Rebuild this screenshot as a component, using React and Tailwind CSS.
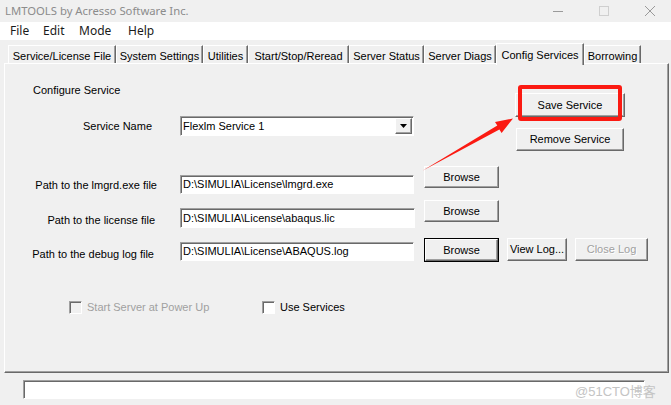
import React from 'react';

// classic win32 3D edges
const raised =
  'bg-[#f0f0f0] border border-t-white border-l-white border-r-[#696969] border-b-[#696969] shadow-[inset_-1px_-1px_0_#a0a0a0]';
const sunken =
  'bg-white border border-t-[#a0a0a0] border-l-[#a0a0a0] border-r-white border-b-white shadow-[inset_1px_1px_0_#696969]';

const tabs = [
  { label: 'Service/License File', w: 'w-[108px]' },
  { label: 'System Settings', w: 'w-[87px]' },
  { label: 'Utilities', w: 'w-[45px]' },
  { label: 'Start/Stop/Reread', w: 'w-[101px]' },
  { label: 'Server Status', w: 'w-[75px]' },
  { label: 'Server Diags', w: 'w-[72px]' },
  { label: 'Config Services', w: 'w-[88px]', active: true },
  { label: 'Borrowing', w: 'w-[57px]' },
];

const Button = ({ children, className = '', disabled }) => (
  <div
    className={`${raised} flex items-center justify-center text-[11px] ${
      disabled ? 'text-[#a0a0a0] [text-shadow:1px_1px_0_#fff]' : 'text-black'
    } ${className}`}
  >
    {children}
  </div>
);

const Field = ({ value, className = '' }) => (
  <div className={`${sunken} flex items-center pl-[2px] text-[11px] text-black ${className}`}>
    {value}
  </div>
);

const Checkbox = ({ label, disabled }) => (
  <div className="flex items-center">
    <div
      className={`w-[13px] h-[13px] border border-t-[#a0a0a0] border-l-[#a0a0a0] border-r-white border-b-white shadow-[inset_1px_1px_0_#696969] ${
        disabled ? 'bg-[#f0f0f0]' : 'bg-white'
      }`}
    />
    <span className={`ml-[5px] text-[11px] ${disabled ? 'text-[#a0a0a0]' : 'text-black'}`}>{label}</span>
  </div>
);

export default function App() {
  return (
    <div className="relative w-[671px] h-[405px] overflow-hidden bg-[#f0f0f0] font-['Liberation_Sans',Arial,sans-serif] select-none">
      {/* title bar */}
      <div className="h-[22px] flex items-center">
        <span className="ml-[5px] text-[11.3px] text-[#8c8c8c] font-['Noto_Sans',sans-serif]">
          LMTOOLS by Acresso Software Inc.
        </span>
        <div className="ml-auto flex items-center h-full mr-[-2px]">
          <div className="w-[46px] flex justify-center">
            <svg width="10" height="10" viewBox="0 0 10 10">
              <path d="M0 5.5h10" stroke="#9a9a9a" strokeWidth="1" />
            </svg>
          </div>
          <div className="w-[46px] flex justify-center">
            <svg width="10" height="10" viewBox="0 0 10 10">
              <rect x="0.5" y="0.5" width="9" height="9" fill="none" stroke="#cfcfcf" />
            </svg>
          </div>
          <div className="w-[46px] flex justify-center">
            <svg width="10" height="10" viewBox="0 0 10 10">
              <path d="M0 0L10 10M10 0L0 10" stroke="#9a9a9a" strokeWidth="1" />
            </svg>
          </div>
        </div>
      </div>

      {/* menu bar */}
      <div className="h-[18px] bg-white flex items-center pl-[10px] text-[12px] text-[#1a1a1a] font-['Noto_Sans',sans-serif]">
        <span className="w-[33px]">File</span>
        <span className="w-[36px]">Edit</span>
        <span className="w-[49px]">Mode</span>
        <span>Help</span>
      </div>

      {/* tab strip */}
      <div className="mt-[3px] h-[20px] flex items-end pl-[8px]">
        {tabs.map((t) =>
          t.active ? (
            <div
              key={t.label}
              className={`${t.w} relative z-10 h-[22px] mb-[-2px] bg-[#f0f0f0] border-t border-l border-white border-r border-r-[#696969] shadow-[inset_-1px_0_0_#a0a0a0] flex justify-center pt-[3px] text-[11px] text-black`}
            >
              {t.label}
            </div>
          ) : (
            <div
              key={t.label}
              className={`${t.w} h-[18px] border-t border-l border-white border-r border-r-[#696969] shadow-[inset_-1px_0_0_#a0a0a0] flex justify-center pt-[2px] text-[11px] text-black`}
            >
              {t.label}
            </div>
          )
        )}
      </div>

      {/* tab panel */}
      <div className={`${raised} ml-[4px] w-[665px] h-[310px] flex flex-col`}>
        <div className="flex">
          <div className="w-[510px]">
            <div className="mt-[20px] ml-[28px] h-[12px] leading-[12px] text-[11px]">Configure Service</div>
            <div className="mt-[20px] flex items-center h-[20px]">
              <div className="w-[147px] text-right text-[11px]">Service Name</div>
              <div className={`${sunken} ml-[28px] w-[234px] h-[20px] flex items-center text-[11px]`}>
                <span className="pl-[2px] flex-1">Flexlm Service 1</span>
                <div className={`${raised} w-[17px] h-[16px] mr-[1px] flex items-center justify-center`}>
                  <svg width="7" height="4" viewBox="0 0 7 4">
                    <path d="M0 0h7L3.5 4z" fill="#000" />
                  </svg>
                </div>
              </div>
            </div>
          </div>
          <div className="flex flex-col">
            <Button className="mt-[29px] w-[110px] h-[24px]">Save Service</Button>
            <Button className="mt-[11px] ml-[1px] w-[108px] h-[23px]">Remove Service</Button>
          </div>
        </div>

        {/* path rows */}
        <div className="mt-[15px] h-[29px] flex items-start">
          <div className="w-[152px] mt-[13px] h-[13px] leading-[13px] text-right text-[11px]">
            Path to the lmgrd.exe file
          </div>
          <Field className="ml-[23px] mt-[9px] w-[234px] h-[19px]" value={'D:\\SIMULIA\\License\\lmgrd.exe'} />
          <Button className="ml-[10px] w-[75px] h-[22px]">Browse</Button>
        </div>

        <div className="mt-[5px] h-[28px] flex items-start">
          <div className="w-[150px] mt-[14px] h-[13px] leading-[13px] text-right text-[11px]">
            Path to the license file
          </div>
          <Field className="ml-[25px] mt-[8px] w-[235px] h-[20px]" value={'D:\\SIMULIA\\License\\abaqus.lic'} />
          <Button className="ml-[9px] w-[75px] h-[22px]">Browse</Button>
        </div>

        <div className="mt-[10px] h-[24px] flex items-start">
          <div className="w-[149px] mt-[10px] h-[13px] leading-[13px] text-right text-[11px]">
            Path to the debug log file
          </div>
          <Field className="ml-[26px] mt-[4px] w-[234px] h-[19px]" value={'D:\\SIMULIA\\License\\ABAQUS.log'} />
          <div className="ml-[10px] border border-black">
            <Button className="w-[73px] h-[22px]">Browse</Button>
          </div>
          <Button className="ml-[8px] w-[60px] h-[23px]">View Log...</Button>
          <Button className="ml-[8px] w-[73px] h-[23px]" disabled>
            Close Log
          </Button>
        </div>

        {/* options */}
        <div className="mt-[37px] flex items-center">
          <div className="ml-[64px] w-[193px]">
            <Checkbox label="Start Server at Power Up" disabled />
          </div>
          <Checkbox label="Use Services" />
        </div>
      </div>

      {/* status bar */}
      <div className={`${sunken} bg-[#f0f0f0] mt-[7px] ml-[23px] w-[622px] h-[19px]`} />

      {/* annotation: red box and arrow */}
      <div className="absolute left-[518px] top-[85px] w-[104px] h-[36px] border-[4px] border-[#fb1a12] rounded-[3px] pointer-events-none" />
      <svg className="absolute left-0 top-0 pointer-events-none" width="671" height="405" viewBox="0 0 671 405">
        <polygon
          points="422,171 497.3,125.6 495,122 513,118.5 501.6,133 499.4,129.4"
          fill="#fb1a12"
        />
      </svg>

      {/* watermark */}
      <div className="absolute left-[575px] top-[382px] text-[13px] text-[#c4c4c4] font-['Liberation_Sans','Noto_Sans_CJK_SC',sans-serif]">
        @51CTO博客
      </div>
    </div>
  );
}
